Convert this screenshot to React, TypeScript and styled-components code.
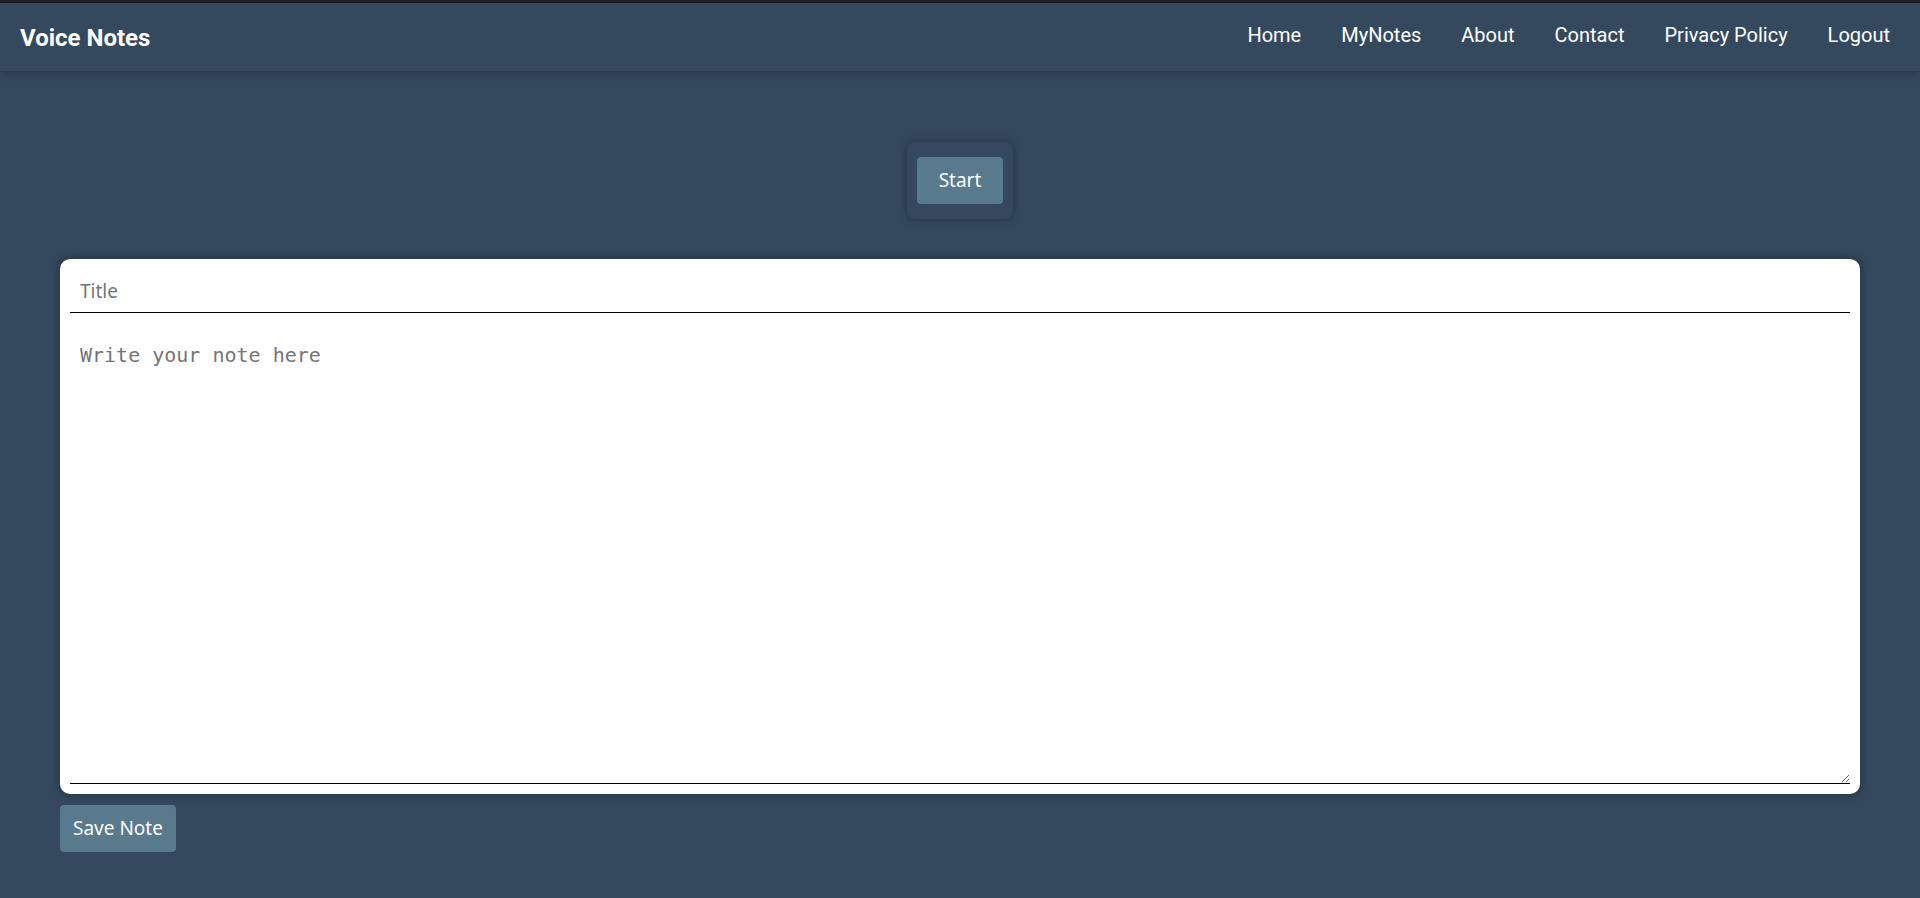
import React from "react";
import styled, { createGlobalStyle } from "styled-components";

const GlobalStyle = createGlobalStyle`
  html::-webkit-scrollbar {
    width: 4px;
  }
  html::-webkit-scrollbar-track {
    background: #34495e;
  }
  html::-webkit-scrollbar-thumb {
    background: #5d636a;
    border-radius: 2px;
  }
  body {
    margin: 0;
    background: #34495e;
    border-top: 3px solid #1d1f22;
    font-family: Roboto, "Noto Sans", sans-serif;
  }
  * {
    box-sizing: border-box;
  }
`;

const links = ["Home", "MyNotes", "About", "Contact", "Privacy Policy", "Logout"];

const App: React.FC = () => {
  return (
    <>
      <GlobalStyle />
      <Navbar>
        <Brand>Voice Notes</Brand>
        <NavLinks>
          {links.map((l) => (
            <NavLink key={l} href="#">
              {l}
            </NavLink>
          ))}
        </NavLinks>
      </Navbar>
      <Main>
        <Recorder>
          <ActionButton>Start</ActionButton>
        </Recorder>
        <NoteCard>
          <TitleInput placeholder="Title" />
          <NoteArea placeholder="Write your note here" />
        </NoteCard>
        <SaveButton>Save Note</SaveButton>
      </Main>
    </>
  );
};

export default App;

const Navbar = styled.nav`
  position: relative;
  z-index: 1;
  height: 68px;
  display: flex;
  align-items: center;
  justify-content: space-between;
  padding: 0 30px 0 20px;
  background: #34495e;
  box-shadow: 0 2px 8px rgba(0, 0, 0, 0.3);
`;

const Brand = styled.div`
  padding-top: 2px;
  color: #fff;
  font-family: Roboto, sans-serif;
  font-size: 24px;
  font-weight: 700;
`;

const NavLinks = styled.div`
  display: flex;
  gap: 40px;
  padding-bottom: 5px;
`;

const NavLink = styled.a`
  color: #fff;
  text-decoration: none;
  font-family: Roboto, sans-serif;
  font-size: 20px;
`;

const Main = styled.main`
  display: flex;
  flex-direction: column;
  padding: 71px 60px 176px;
`;

const Recorder = styled.div`
  align-self: center;
  padding: 15px 10px;
  border-radius: 8px;
  background: #34495e;
  box-shadow: 0 0 8px rgba(0, 0, 0, 0.35);
`;

const ActionButton = styled.button`
  display: block;
  padding: 12px 22px;
  border: none;
  border-radius: 4px;
  background: #587a8c;
  color: #fff;
  font-family: "Noto Sans", "Open Sans", sans-serif;
  font-size: 19px;
  line-height: 23px;
  cursor: pointer;
`;

const NoteCard = styled.div`
  margin-top: 40px;
  display: flex;
  flex-direction: column;
  gap: 20px;
  padding: 10px;
  background: #fff;
  border-radius: 10px;
  box-shadow: 0 0 10px rgba(0, 0, 0, 0.4);
`;

const TitleInput = styled.input`
  height: 44px;
  padding: 10px;
  border: none;
  border-bottom: 1px solid #000;
  outline: none;
  font-family: "Noto Sans", "Open Sans", sans-serif;
  font-size: 19px;
  &::placeholder {
    color: #757575;
  }
`;

const NoteArea = styled.textarea`
  height: 451px;
  padding: 10px;
  border: none;
  border-bottom: 1px solid #000;
  outline: none;
  resize: vertical;
  font-family: "DejaVu Sans Mono", monospace;
  font-size: 20px;
  &::placeholder {
    color: #757575;
  }
`;

const SaveButton = styled(ActionButton)`
  align-self: flex-start;
  margin-top: 11px;
  padding: 12px 13px;
`;
